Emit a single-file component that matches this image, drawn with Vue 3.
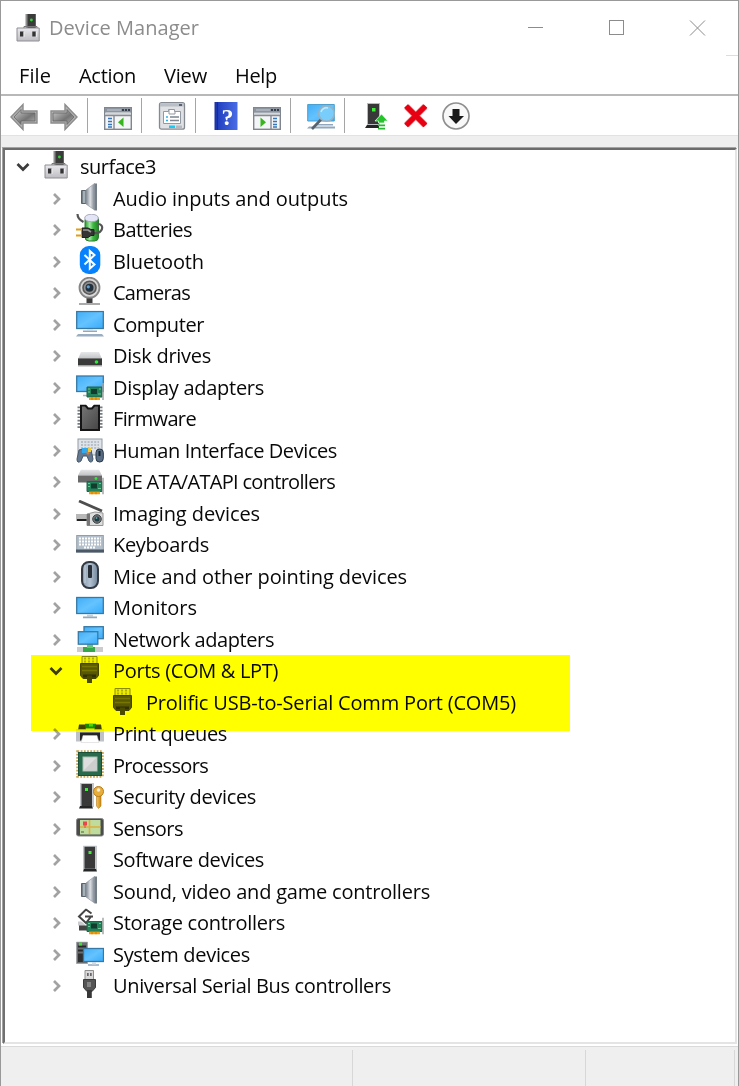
<script setup>
const items = [
  { t: 'Audio inputs and outputs', i: 'speaker', w: 235 },
  { t: 'Batteries', i: 'battery', w: 79 },
  { t: 'Bluetooth', i: 'bluetooth', w: 91 },
  { t: 'Cameras', i: 'camera', w: 77 },
  { t: 'Computer', i: 'computer', w: 91 },
  { t: 'Disk drives', i: 'disk', w: 98 },
  { t: 'Display adapters', i: 'display', w: 151 },
  { t: 'Firmware', i: 'firmware', w: 83 },
  { t: 'Human Interface Devices', i: 'hid', w: 224 },
  { t: 'IDE ATA/ATAPI controllers', i: 'ide', w: 222 },
  { t: 'Imaging devices', i: 'imaging', w: 147 },
  { t: 'Keyboards', i: 'keyboard', w: 96 },
  { t: 'Mice and other pointing devices', i: 'mouse', w: 294 },
  { t: 'Monitors', i: 'monitor', w: 84 },
  { t: 'Network adapters', i: 'network', w: 161 },
  { t: 'Ports (COM & LPT)', i: 'port', open: true, w: 165 },
  { t: 'Prolific USB-to-Serial Comm Port (COM5)', i: 'port', leaf: true, w: 370 },
  { t: 'Print queues', i: 'printer', w: 114 },
  { t: 'Processors', i: 'cpu', w: 95 },
  { t: 'Security devices', i: 'security', w: 143 },
  { t: 'Sensors', i: 'sensor', w: 70 },
  { t: 'Software devices', i: 'software', w: 151 },
  { t: 'Sound, video and game controllers', i: 'speaker', w: 317 },
  { t: 'Storage controllers', i: 'storage', w: 172 },
  { t: 'System devices', i: 'system', w: 137 },
  { t: 'Universal Serial Bus controllers', i: 'usb', w: 278 },
]
// Vertical seat of each glyph within its icon slot.
const seat = { computer: 1.5, disk: 2, display: 2, firmware: 1.5, hid: 3, ide: 3.5, imaging: 2, keyboard: 1.5, monitor: 2.5, network: 2, port: 0.5, printer: 5.5, security: 1.5, sensor: 1, software: 1.5, storage: 1.5, system: 2.5 }
const menus = [['File', 32], ['Action', 57], ['View', 43], ['Help', 42]]

// Tightens or loosens tracking so a label fills its nominal width.
const vFit = {
  mounted(el, { value }) {
    const n = el.textContent.length
    el.style.letterSpacing = ((value - el.getBoundingClientRect().width) / n).toFixed(3) + 'px'
  },
}
</script>

<template>
  <div class="window">
    <svg class="defs" width="0" height="0" aria-hidden="true">
      <defs>
        <linearGradient id="scr" x1="0" y1="0" x2="1" y2="1"><stop offset="0" stop-color="#43adf5"/><stop offset=".5" stop-color="#64c3ff"/><stop offset="1" stop-color="#38abfb"/></linearGradient>
        <linearGradient id="spk"><stop offset="0" stop-color="#7d868f"/><stop offset=".5" stop-color="#dce0e4"/><stop offset="1" stop-color="#7d868f"/></linearGradient>
        <linearGradient id="arr" x1="0" x2="1" y1="0" y2="1"><stop offset="0" stop-color="#cfcfcf"/><stop offset=".6" stop-color="#747474"/><stop offset="1" stop-color="#b5b5b5"/></linearGradient>
        <linearGradient id="base" x2="0" y2="1"><stop offset="0" stop-color="#e9e9ee"/><stop offset="1" stop-color="#bdbdc2"/></linearGradient>
        <linearGradient id="msg"><stop offset="0" stop-color="#8798ab"/><stop offset=".5" stop-color="#b3c3d3"/><stop offset="1" stop-color="#708398"/></linearGradient>
        <linearGradient id="hlp"><stop offset="0" stop-color="#1b2f9e"/><stop offset=".2" stop-color="#2443c3"/><stop offset="1" stop-color="#4a6de6"/></linearGradient>
        <linearGradient id="chp" x1="0" y1="0" x2="1" y2="1"><stop offset="0" stop-color="#777"/><stop offset="1" stop-color="#454545"/></linearGradient>
        <linearGradient id="gld"><stop offset="0" stop-color="#f6c453"/><stop offset="1" stop-color="#c88715"/></linearGradient>
        <linearGradient id="dsk" x2="0" y2="1"><stop offset="0" stop-color="#e6e7e9"/><stop offset="1" stop-color="#bfc1c4"/></linearGradient>
        <linearGradient id="bat"><stop offset="0" stop-color="#2c9a30"/><stop offset=".35" stop-color="#a4e8a4"/><stop offset=".6" stop-color="#3dbb40"/><stop offset="1" stop-color="#23802a"/></linearGradient>
        <symbol id="root" viewBox="0 0 28 28">
          <rect x="10.500" y="0" width="10.500" height="15" fill="#8d8d8d"/><rect x="12.500" y="0" width="8" height="14" fill="#3b3b3b"/><circle cx="16.400" cy="6" r="1.400" fill="#34d334"/>
          <path d="M2 14H24.200V27H2Z" fill="url(#base)" stroke="#8f8f94"/><path d="M9 14v-1.500h13V14" fill="none" stroke="#777"/>
          <path d="M5 17.500h3.500v5H5zM17.300 17.500h3.500v5h-3.500z" fill="#343434"/><path d="M9 18v5M21.300 18v5" stroke="#fff" stroke-width=".7"/>
        </symbol>
        <symbol id="speaker" viewBox="0 0 28 28">
          <path d="M5.500 7.500h5v13h-5z" fill="#768089" stroke="#59636e"/><path d="M8 8v12" stroke="#a6b0b9" stroke-width="2"/>
          <path d="M10 7L18.500 .5V27L10 21Z" fill="url(#spk)" stroke="#8f99a2" stroke-width=".7"/><path d="M18.500 .5h2.500v27h-2.500z" fill="#747e87"/>
        </symbol>
        <symbol id="battery" viewBox="0 0 28 28">
          <rect x="9" y="2" width="13.500" height="25" rx="4" fill="url(#bat)" stroke="#2b7a30"/>
          <ellipse cx="15.500" cy="4" rx="6.800" ry="3.800" fill="#e4e4f7" stroke="#a9a8bd"/>
          <path d="M1.500 0c0 4 2 6 6 8M18 19c9 1 11-9 4-9" fill="none" stroke="#555" stroke-width="2.200"/>
          <path d="M6 14h6l3 1.500h3v6h-3l-3 2H6z" fill="#343434" stroke="#202020"/><path d="M7 16h5l3 2" stroke="#999" stroke-width="1.600" fill="none"/><path d="M0 15.500h6M0 21.500h6" stroke="#df9e16" stroke-width="2"/>
        </symbol>
        <symbol id="bluetooth" viewBox="0 0 28 28">
          <rect x="3.800" y="0" width="20.500" height="28" rx="9" fill="#0782fc"/><path d="M8.500 9l10 9.500-4.700 4V5l4.700 4-10 9.500" fill="none" stroke="#fff" stroke-width="2"/>
        </symbol>
        <symbol id="camera" viewBox="0 0 28 28">
          <path d="M13.500 19v7" stroke="#3d3d3d" stroke-width="6"/><path d="M3 27h21" stroke="#aaa" stroke-width="2"/>
          <circle cx="13.500" cy="10.700" r="10" fill="#d9d9d9" stroke="#858585" stroke-width="1.800"/><circle cx="13.500" cy="10.700" r="6.500" fill="#929292" stroke="#585858" stroke-width="1.600"/>
          <circle cx="13.500" cy="10.700" r="4" fill="#22313c"/><circle cx="12.300" cy="9.800" r="1.600" fill="#5e9ed6"/>
        </symbol>
        <symbol id="computer" viewBox="0 0 28 28">
          <rect x=".7" y="1" width="26.600" height="17" fill="url(#scr)" stroke="#3779a6" stroke-width="1.300"/>
          <path d="M7 20.700h14" stroke="#90a9bd" stroke-width="1.500"/><path d="M11 19h6v1h-6z" fill="#c5d0da"/><path d="M2 23.500h24l2 2.500H0z" fill="#9aaec3"/>
        </symbol>
        <symbol id="disk" viewBox="0 0 28 28">
          <path d="M5 10h18l3 7H2z" fill="url(#dsk)"/><rect x="2" y="16" width="24" height="7.500" fill="#3a3a3a"/><path d="M2 16.500h24" stroke="#777"/><path d="M2 24h24" stroke="#aaa"/><circle cx="20.500" cy="20" r="1.800" fill="#25ef32"/>
        </symbol>
        <symbol id="card" viewBox="0 0 18 17">
          <path d="M1 4h15v10H1z" fill="#23825a" stroke="#236248"/><path d="M5 6h6v5H5z" fill="#143c2e"/><path d="M2 6h2M2 9h2M13 6h2M12 11h3" stroke="#6fc696"/>
          <path d="M3 14h11v3H3z" fill="#f1a10e"/><path d="M6 14v3M10 14v3" stroke="#d17c00"/><path d="M17 0v17" stroke="#a6a6a6" stroke-width="1.500"/>
        </symbol>
        <symbol id="display" viewBox="0 0 28 28">
          <rect x=".7" y="2" width="26.600" height="15.500" fill="url(#scr)" stroke="#3779a6" stroke-width="1.300"/><path d="M7 21.500h8" stroke="#a4b7c7" stroke-width="1.500"/><use href="#card" x="10" y="9" width="18" height="17"/>
        </symbol>
        <symbol id="firmware" viewBox="0 0 28 28">
          <path d="M3.500 2v23M24.500 2v23" stroke="#737b80" stroke-width="4" stroke-dasharray="1.700 1.600"/>
          <path d="M5 1h4.500l2.500 3h4l2.500-3H23v24.500H5z" fill="url(#chp)" stroke="#151515" stroke-width="2"/>
        </symbol>
        <symbol id="hid" viewBox="0 0 28 28">
          <rect x="2" y="1" width="24" height="16" fill="#e0e4e9" stroke="#929ba5"/><path d="M5 4h18M5 7h18M5 10h18" stroke="#8c98a5" stroke-dasharray="2 1.300"/>
          <path d="M3 12q6-3 12 0l2 9q-1 5-4 2l-2-5H7l-2 5q-4 3-4-2z" fill="#64788f" stroke="#44566a"/><path d="M6 10h7v5H6z" fill="#35a9ed"/><circle cx="12" cy="15" r="1.600" fill="#e67b27"/><path d="M12 10h3v4h-3z" fill="#efca38"/>
          <rect x="20" y="11" width="7.300" height="13" rx="3.500" fill="#586c83" stroke="#293848"/><path d="M23.500 13v5" stroke="#18222c" stroke-width="2"/>
        </symbol>
        <symbol id="ide" viewBox="0 0 28 28">
          <path d="M5 0h18l3 6H2z" fill="url(#dsk)"/><path d="M2 6h24v7H2z" fill="#696969"/><circle cx="20" cy="9" r="1.400" fill="#25ef32"/><use href="#card" x="10" y="8" width="18" height="17"/>
        </symbol>
        <symbol id="imaging" viewBox="0 0 28 28">
          <path d="M3 1l23 10" stroke="#4e4e4e" stroke-width="2.800"/><path d="M0 14h12v7H0z" fill="#b8b8b8"/><path d="M1 20h11" stroke="#222" stroke-width="2"/>
          <path d="M11 14l8-2 8 1v12.500H11z" fill="#ddd" stroke="#959595"/><path d="M11 14h3v11.500h-3z" fill="#777"/><circle cx="21" cy="19" r="4.300" fill="#6f7678" stroke="#3d4345"/><circle cx="21" cy="19" r="2.500" fill="#243840"/><circle cx="20.500" cy="18" r="1" fill="#5ca1a4"/>
        </symbol>
        <symbol id="keyboard" viewBox="0 0 28 28">
          <rect x=".7" y="5" width="26.600" height="16.500" fill="#b3bfca" stroke="#929ea9"/><path d="M3 8h22M3 11h22M3 14h22M8 17h12" stroke="#fff" stroke-width="1.800" stroke-dasharray="2 1"/><path d="M0 19h28v3H0z" fill="#4b5966"/>
        </symbol>
        <symbol id="mouse" viewBox="0 0 28 28">
          <rect x="6" y="1" width="16" height="26" rx="7" fill="url(#msg)" stroke="#333a43" stroke-width="2"/><path d="M9 4v18" stroke="#d5e1eb" stroke-width=".8"/><rect x="12" y="4" width="4" height="13" rx="1" fill="#2a3038"/>
        </symbol>
        <symbol id="monitor" viewBox="0 0 28 28">
          <rect x=".7" y="3" width="26.600" height="16" fill="url(#scr)" stroke="#3779a6" stroke-width="1.300"/><path d="M11 20h6v2h-6z" fill="#c5d0da"/><path d="M7 22.800h14" stroke="#90a9bd" stroke-width="1.700"/>
        </symbol>
        <symbol id="network" viewBox="0 0 28 28">
          <path d="M1 21h26v5H1z" fill="#ccc"/><path d="M7 21h12v5H7z" fill="#36a64d"/><path d="M11 18h6v4h-6z" fill="#66c877"/>
          <rect x="8" y=".7" width="19.300" height="12" fill="url(#scr)" stroke="#3779a6" stroke-width="1.300"/><rect x="2.300" y="5.700" width="19.500" height="12.500" fill="url(#scr)" stroke="#3779a6" stroke-width="1.300"/>
        </symbol>
        <symbol id="port" viewBox="0 0 28 28">
          <path d="M6 1h15v7H6z" fill="#ececec" stroke="#8a8a8a"/><path d="M9 2v5M13 2v5M17 2v5" stroke="#777" stroke-dasharray="2 1"/>
          <path d="M4.500 8h18v12l-2.500 3H7l-2.500-3z" fill="#585858" stroke="#444"/><path d="M6 11h15M6 15h15" stroke="#777" stroke-width="1.400"/><path d="M7 19h13v3H7z" fill="#303030"/><path d="M11 20h5v7.500h-5z" fill="#4b4b4b"/>
        </symbol>
        <symbol id="printer" viewBox="0 0 28 28">
          <path d="M9 0h11v5H9z" fill="#168c18"/><path d="M13 0h4v3h-4z" fill="#4ed34e"/><path d="M3 1h6l1 6H2zM20 1h5l1 6h-8z" fill="#424242"/><path d="M0 6h28v12H0z" fill="#bfc2c6"/><path d="M0 6h28v2H0z" fill="#eee"/>
          <path d="M4 9h20v8H4z" fill="#252525"/><path d="M7 12h14l2 7H5z" fill="#fff" stroke="#ccc" stroke-width=".5"/>
        </symbol>
        <symbol id="cpu" viewBox="0 0 28 28">
          <rect x="1.500" y="1.500" width="25" height="25" fill="none" stroke="#c8a456" stroke-width="2.500" stroke-dasharray="1.800 1.400"/><rect x="2.500" y="2.500" width="23" height="23" fill="#286a4b" stroke="#195038"/><rect x="7" y="7" width="14" height="14" fill="#dedede" stroke="#a8c0b2"/><path d="M8 20L20 8v12z" fill="#cdcdcd"/>
        </symbol>
        <symbol id="software" viewBox="0 0 28 28">
          <path d="M7 0h14v25H7z" fill="#c3c7ca"/><path d="M8.500 1.300h10.500v22h-10.500z" fill="#393939"/><path d="M12.500 5.500h3v3h-3z" fill="#40ed38"/><path d="M8 23.500h12l1 2.500H7z" fill="#252525"/>
        </symbol>
        <symbol id="security" viewBox="0 0 28 28">
          <path d="M4 .5h14v24H4z" fill="#c3c7ca"/><path d="M5.500 1.500h10.500v22H5.500z" fill="#393939"/><path d="M9 5.500h3v3H9z" fill="#40ed38"/><path d="M4 23.500h12l1 2.500H3z" fill="#252525"/>
          <path d="M20.500 12h4.500v11.500l-2.500 2.500-2-2.500z" fill="url(#gld)" stroke="#b67612" stroke-width=".6"/><circle cx="22.500" cy="9" r="5" fill="#e8ae3c" stroke="#b77a1c"/><circle cx="22.500" cy="7.500" r="1.800" fill="#f7eedb"/>
        </symbol>
        <symbol id="sensor" viewBox="0 0 28 28">
          <rect x=".5" y="4.500" width="27" height="17.500" rx="2" fill="#4b4b4b" stroke="#888"/><path d="M4 6h20.500v14.500H4z" fill="#bfdc9c"/><path d="M4 13h20.500M13.500 6v14" stroke="#dfac40" stroke-width="1.600"/><path d="M7 7.500h4v4H7z" fill="#e8484b"/><path d="M9 11v3" stroke="#e8484b"/><path d="M5 17h3v2H5z" fill="#829d72"/>
        </symbol>
        <symbol id="storage" viewBox="0 0 28 28">
          <path d="M3 15h14v7H3z" fill="#444"/><path d="M2 13h16v4H2z" fill="#c9cbce"/><path d="M15.500 5L10 1 3 8l7 6.500L15 9" fill="none" stroke="#fff" stroke-width="4"/><path d="M15.500 5L10 1 3 8l7 6.500L15 8H9M13 8h4" fill="none" stroke="#454545" stroke-width="2"/><use href="#card" x="10" y="9" width="18" height="17"/>
        </symbol>
        <symbol id="system" viewBox="0 0 28 28">
          <path d="M.5 .5h11v21.500H.5z" fill="#6a6e70" stroke="#a2a6a8"/><path d="M2 5h8M2 9h8" stroke="#292929" stroke-width="2"/><path d="M2 12h8v8.500H2z" fill="#303030"/><path d="M3 1h3v3H3z" fill="#40df38"/>
          <rect x="7.500" y="7" width="20" height="13" fill="url(#scr)" stroke="#3779a6" stroke-width="1.300"/><path d="M12 23.500h11" stroke="#90a9bd" stroke-width="1.500"/><path d="M16 20.500h4v2.500h-4z" fill="#d3dce4"/>
        </symbol>
        <symbol id="usb" viewBox="0 0 28 28">
          <path d="M9 .5h8.500v9H9z" fill="#d9d9d9" stroke="#8f8f8f"/><path d="M11 3h1.700v3H11zM14 3h1.700v3H14z" fill="#666"/><path d="M7.500 9.500h12v8l-3.500 4h-5l-3.500-4z" fill="#555" stroke="#3c3c3c"/><path d="M11 12v5h4v-5z" fill="#858585"/><path d="M11 20h4.800v8H11z" fill="#373737"/>
        </symbol>
        <symbol id="console" viewBox="0 0 28 28">
          <rect x=".7" y="5.700" width="26.600" height="21.600" fill="#f4f5f6" stroke="#7f868f" stroke-width="1.400"/><path d="M1 6h26v4.500H1z" fill="#8c949f"/><path d="M3 8h14" stroke="#c4cad1"/><path d="M18 8h2M21 8h2M24 8h2" stroke="#333d4b" stroke-width="2"/><path d="M1 12h26" stroke="#d4d7db" stroke-width="2"/><path d="M1 13.500h26M10 13v14" stroke="#858c95" stroke-width="1.400"/>
          <path d="M4 16.500h4M4 19.500h4M4 22.500h4M4 25h4" stroke="#3575bb" stroke-width="1.400"/>
        </symbol>
      </defs>
    </svg>

    <header class="titlebar">
      <svg class="icon"><use href="#root"/></svg>
      <span v-fit="150" class="title">Device Manager</span>
      <svg class="controls" width="180" height="18" viewBox="0 0 180 18" fill="none" stroke="#8c8c8c">
        <path d="M1 8.500h15"/><rect x="82.500" y="1.500" width="14" height="14"/><path d="M163 1.500l15 15M178 1.500l-15 15"/>
      </svg>
      <i class="notch"></i>
    </header>

    <nav class="menu">
      <span v-for="m in menus" :key="m[0]" class="menu-item"><span v-fit="m[1]" class="fit">{{ m[0] }}</span></span>
    </nav>

    <div class="toolbar">
      <div class="group first">
        <svg class="icon" viewBox="0 0 28 28"><path d="M1 15L13 2.500V9H27v12H13v6.500z" fill="#b4b4b4" stroke="#8c8c8c" stroke-width="1.400"/><path d="M4 15l7-7.500V11h14v8H11v3.500z" fill="url(#arr)" stroke="#666" stroke-width=".8"/></svg>
        <svg class="icon" viewBox="0 0 28 28"><path d="M27 15L15 2.500V9H1v12h14v6.500z" fill="#b4b4b4" stroke="#8c8c8c" stroke-width="1.400"/><path d="M24 15l-7-7.500V11H3v8h14v3.500z" fill="url(#arr)" stroke="#666" stroke-width=".8"/></svg>
      </div>
      <div class="group">
        <svg class="icon" viewBox="0 0 28 28"><use href="#console"/><path d="M19.500 15.500v9.500L14 20.200z" fill="#36b51f"/></svg>
      </div>
      <div class="group">
        <svg class="icon" viewBox="0 0 28 28"><rect x="1.500" y=".700" width="25" height="26.500" rx="2" fill="#dfe1e4" stroke="#858a90" stroke-width="1.300"/><path d="M2 1.500h24v3H2z" fill="#b9bfc6"/><path d="M21 3h3" stroke="#39424f" stroke-width="1.500"/><path d="M5.500 9.500h5v-2h6v2h6v12h-17z" fill="#fff" stroke="#9199a2"/><path d="M11 8v4h6V9.500" fill="none" stroke="#9199a2"/><path d="M12 15h9M12 18.500h9" stroke="#7d8590" stroke-width="1.300"/><path d="M8 15h2M8 18.500h2" stroke="#2aaef0" stroke-width="1.500"/><path d="M11 23.500h6v2.500h-6z" fill="#19c9f5"/><path d="M18 23.500h6v2.500h-6z" fill="#b5bac0"/></svg>
      </div>
      <div class="group wide">
        <svg class="icon" viewBox="0 0 28 28"><path d="M2.500 0h23v28h-23z" fill="url(#hlp)"/><path d="M5.500 0v28" stroke="#1a2b8d"/><text x="15.500" y="23" class="help-mark">?</text></svg>
        <svg class="icon" viewBox="0 0 28 28"><g transform="translate(28 0) scale(-1 1)"><use href="#console"/></g><path d="M1.400 6.400h25.200v4.100H1.400z" fill="#8c949f"/><path d="M3 8h14" stroke="#c4cad1"/><path d="M18 8h2M21 8h2M24 8h2" stroke="#333d4b" stroke-width="2"/><path d="M7.500 15.500v9.500L13 20.200z" fill="#36b51f"/></svg>
      </div>
      <div class="group">
        <svg class="icon" viewBox="0 0 28 28"><path d="M.700 2.500h26.600v16.500H.7z" fill="url(#scr)" stroke="#4c9fcf"/><path d="M8 22h18v1.500H8zM2 24.500h26v2H0z" fill="#8fa8bd"/><path d="M14 17.500L5 27" stroke="#56636d" stroke-width="2.600"/><circle cx="19.500" cy="11.500" r="7.800" fill="#79cdfa" stroke="#9ab1bf" stroke-width="1.600"/><path d="M14 10q2-5 7-4" stroke="#c0ebff" stroke-width="1.500" fill="none"/></svg>
      </div>
      <div class="group last">
        <svg class="icon" viewBox="0 0 28 28"><path d="M5 1h13v23H5z" fill="#b9bcbf"/><path d="M6 2h11v20H6z" fill="#383838"/><path d="M10 6h3.500v3.500H10z" fill="#40ed38"/><path d="M5 23h12v3H3z" fill="#252525"/><path d="M19.500 12l6.500 7h-3.500v2h-6v-2H13z" fill="#26c32d" stroke="#fff" stroke-width=".7"/><path d="M16 23.300h7M16 26.700h7" stroke="#26b92d" stroke-width="1.800"/></svg>
        <svg class="icon" viewBox="0 0 28 28"><path d="M4.500 4.500l18.500 18.500M23 4.500L4.500 23" stroke="#f0757a" stroke-width="6.300"/><path d="M4 4l19.500 19.500M23.500 4L4 23.500" stroke="#e60012" stroke-width="5.200"/></svg>
        <svg class="icon" viewBox="0 0 28 28"><circle cx="14" cy="14" r="13" fill="#f8f8f8" stroke="#8e8e8e" stroke-width="1.700"/><path d="M10.500 7h7V14H22l-8 8L6.500 14h4z" fill="#191919"/></svg>
      </div>
    </div>
    <div class="rebar"></div>

    <main class="tree">
      <div class="row root">
        <svg class="chevron open" viewBox="0 0 14 10"><path d="M1.500 2L7 7.500 12.500 2"/></svg>
        <svg class="icon"><use href="#root"/></svg>
        <span v-fit="76" class="label">surface3</span>
      </div>
      <div v-for="it in items" :key="it.t" class="row" :class="{ leaf: it.leaf }">
        <svg v-if="it.open" class="chevron open" viewBox="0 0 14 10"><path d="M1.500 2L7 7.500 12.500 2"/></svg>
        <svg v-else-if="!it.leaf" class="chevron" viewBox="0 0 14 14"><path d="M4 2L9 7l-5 5"/></svg>
        <svg class="icon"><use :href="'#' + it.i" :y="seat[it.i] || 0" width="28" height="28"/></svg>
        <span v-fit="it.w" class="label">{{ it.t }}</span>
      </div>
      <div class="marker"></div>
    </main>

    <footer class="status"><div class="cell a"></div><div class="cell b"></div><div class="cell c"></div></footer>
  </div>
</template>

<style>
body { margin: 0; overflow: hidden; }
</style>

<style scoped>
.window { box-sizing: border-box; width: 739px; height: 1086px; display: flex; flex-direction: column; background: #fff; border: 1px solid #999; border-bottom: 0; font-family: "Open Sans", "Noto Sans", sans-serif; font-size: 20px; color: #080808; }
.defs { position: absolute; }
.icon { width: 28px; height: 28px; flex: none; display: block; overflow: visible; }
.titlebar { position: relative; height: 55px; display: flex; align-items: center; flex: none; padding: 0 0 2px 14px; box-sizing: border-box; }
.title { margin-left: 6px; color: #8c8c8c; white-space: nowrap; }
.controls { margin-left: auto; margin-right: 31px; }
.notch { position: absolute; right: 0; bottom: 0; width: 12px; height: 1px; background: #ddd; }
.menu { height: 38px; flex: none; display: flex; align-items: center; padding-left: 18px; gap: 28px; border-bottom: 2px solid #b8b8b8; }
.menu-item { display: flex; white-space: nowrap; }
.toolbar { height: 39px; flex: none; display: flex; align-items: center; border-bottom: 1px solid #e2e2e2; }
.group { display: flex; align-items: center; gap: 12px; height: 35px; padding: 0 9px 0 16px; border-right: 1px solid #a5a5a5; }
.group.first { padding-left: 9px; }
.group.wide { gap: 13px; }
.group.last { border: 0; padding-left: 17px; }
.help-mark { font: bold 24px "Liberation Serif", serif; fill: #fff; text-anchor: middle; }
.rebar { height: 12px; flex: none; background: #efefef; }
.tree { position: relative; flex: 1; margin: 0 1px 0 2px; border-style: solid; border-width: 2px; border-color: #6c6c6c #e4e4e4 #e4e4e4 #707070; box-shadow: -1px -1px 0 #a3a3a3; padding-top: 1px; background: #fff; }
.row { height: 31.500px; display: flex; align-items: flex-start; padding-left: 43px; }
.row.root { padding-left: 10px; }
.row.leaf { padding-left: 104px; }
.chevron { width: 14px; height: 14px; margin: 9px 12px 0 2px; flex: none; fill: none; stroke: #a2a2a2; stroke-width: 2.700; }
.chevron.open { height: 10px; margin: 11px 13px 0 1px; stroke: #3c3c3c; }
.label { margin-left: 9px; line-height: 31.500px; white-space: nowrap; }
.marker { position: absolute; left: 26px; top: 505px; width: 539px; height: 76px; background: #ff0; mix-blend-mode: multiply; }
.status { height: 40px; flex: none; display: flex; margin-top: 2px; padding-top: 3px; box-sizing: border-box; background: #efefef; border-top: 1px solid #dadada; }
.cell { border-right: 1px solid #d7d7d7; }
.cell.a { width: 351px; }
.cell.b { width: 232px; }
.cell.c { width: 148px; }
</style>
